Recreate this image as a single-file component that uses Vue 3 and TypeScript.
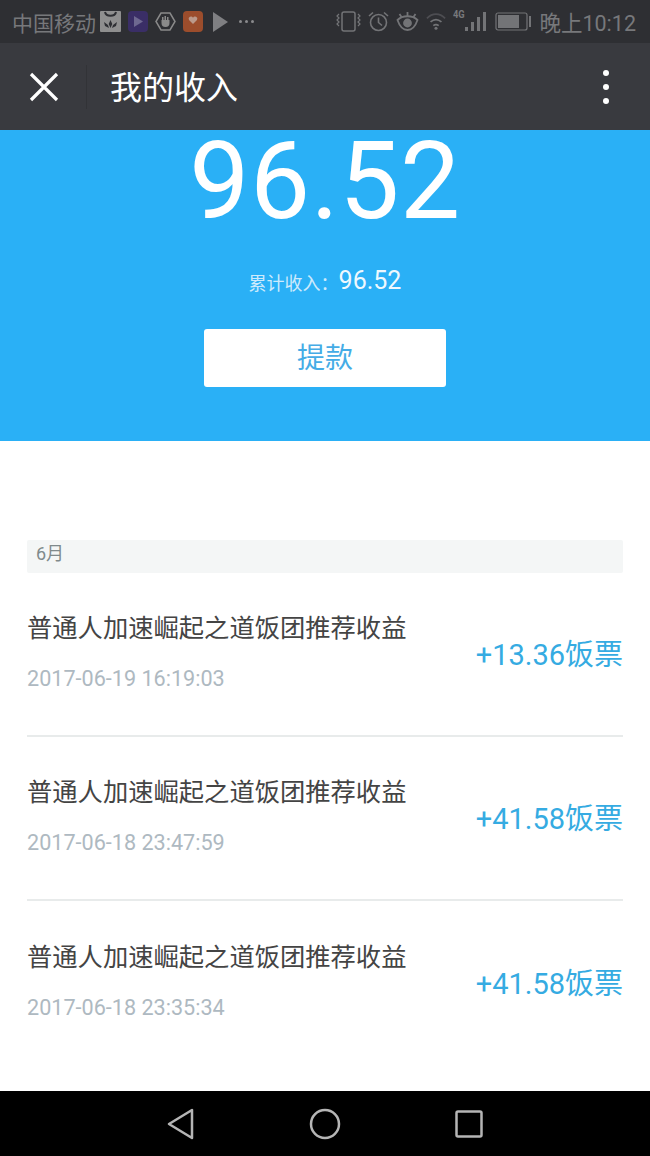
<script setup lang="ts">
interface IncomeRow {
  title: string
  time: string
  amount: string
}

const rows: IncomeRow[] = [
  { title: '普通人加速崛起之道饭团推荐收益', time: '2017-06-19 16:19:03', amount: '+13.36饭票' },
  { title: '普通人加速崛起之道饭团推荐收益', time: '2017-06-18 23:47:59', amount: '+41.58饭票' },
  { title: '普通人加速崛起之道饭团推荐收益', time: '2017-06-18 23:35:34', amount: '+41.58饭票' },
]
</script>

<template>
  <div class="phone">
    <div class="status">
      <div class="status-left">
        <span class="carrier">中国移动</span>
        <svg class="ic" width="21" height="21" viewBox="0 0 21 21">
          <rect width="21" height="21" rx="1" fill="#8f8f8f" />
          <path d="M5 1c1 5 10 5 11 0" fill="none" stroke="#2e2f33" stroke-width="2" />
          <path d="M10.500 9l1.800 4-1.800 4-1.800-4zM4 11l4 3 1 3-4-2zM17 11l-4 3-1 3 4-2z" fill="#2e2f33" />
        </svg>
        <svg class="ic" width="20" height="21" viewBox="0 0 20 21">
          <rect width="20" height="21" rx="4" fill="#3a2e66" />
          <path d="M6 5l9 5.500-9 5.500z" fill="#6e6890" />
        </svg>
        <svg class="ic" width="21" height="21" viewBox="0 0 21 21">
          <path d="M6 2h9l5 8.500-5 8.500H6l-5-8.500z" fill="none" stroke="#8a8a8a" stroke-width="1.500" />
          <path d="M6.500 9h8v3a4 4 0 0 1-8 0zM7 9V6h1.500v3M9.500 9V5H11v4M12 9V6h1.500v3" fill="#8a8a8a" />
        </svg>
        <svg class="ic" width="20" height="21" viewBox="0 0 20 21">
          <rect width="20" height="21" rx="4" fill="#9c4d2c" />
          <path d="M10 13L6 9a2.300 2.300 0 0 1 4-2.300A2.300 2.300 0 0 1 14 9z" fill="#bb9a8b" />
        </svg>
        <svg class="ic ic-play" width="15" height="20" viewBox="0 0 15 20">
          <path d="M0 0l15 10L0 20z" fill="#7f7f82" />
        </svg>
        <span class="more"><i></i><i></i><i></i></span>
      </div>
      <div class="status-right">
        <svg width="25" height="21" viewBox="0 0 25 21" fill="none" stroke="#737477" stroke-width="1.500">
          <rect x="6" y="1" width="13" height="19" rx="2" />
          <path d="M3 3l-2 2 2 2-2 2 2 2-2 2 2 2M22 3l2 2-2 2 2 2-2 2 2 2-2 2" stroke-width="1.200" />
        </svg>
        <svg width="21" height="21" viewBox="0 0 21 21" fill="none" stroke="#737477" stroke-width="1.600">
          <circle cx="10.500" cy="11.500" r="8" />
          <path d="M10.500 6.500v5l3.500 3M1 5l4-3.500M20 5l-4-3.500" />
        </svg>
        <svg width="23" height="21" viewBox="0 0 22 21" fill="none" stroke="#737477" stroke-width="1.800">
          <path d="M1 9c5-5 15-5 20 0-2 6-5 10-10 10S3 15 1 9z" />
          <circle cx="11" cy="12" r="3.500" fill="#737477" />
          <path d="M3 3l2 3M11 1v4M19 3l-2 3" />
        </svg>
        <svg width="20" height="19" viewBox="0 0 22 19" fill="none" stroke="#737477" stroke-width="1.900">
          <path d="M1 6c6-6 14-6 20 0" opacity=".45" />
          <path d="M5 10c4-3.500 8-3.500 12 0" />
          <path d="M8 14c2-1.500 4-1.500 6 0" />
          <circle cx="11" cy="17" r="1.700" fill="#737477" stroke="none" />
        </svg>
        <div class="signal">
          <span class="net">4G</span>
          <svg width="21" height="21" viewBox="0 0 21 21" fill="#737477">
            <rect x="0" y="16" width="3" height="4" />
            <rect x="6" y="11" width="3" height="9" />
            <rect x="12" y="6" width="3" height="14" />
            <rect x="18" y="1" width="3" height="19" />
          </svg>
        </div>
        <svg class="battery" width="37" height="19" viewBox="0 0 37 19">
          <rect x="1" y="1" width="31" height="17" rx="2" fill="none" stroke="#737477" stroke-width="1.200" />
          <rect x="3" y="3" width="21" height="13" fill="#737477" />
          <rect x="34" y="4" width="2" height="11" fill="#737477" />
        </svg>
        <span class="clock">晚上10:12</span>
      </div>
    </div>

    <div class="topbar">
      <svg class="close" width="30" height="30" viewBox="0 0 30 30" stroke="#fff" stroke-width="3.200">
        <path d="M2 2l26 26M28 2L2 28" />
      </svg>
      <div class="divider"></div>
      <div class="title">我的收入</div>
      <div class="dots"><i></i><i></i><i></i></div>
    </div>

    <div class="hero">
      <div class="balance">96.52</div>
      <div class="total"><span class="total-label">累计收入：</span><span class="total-num">96.52</span></div>
      <button class="withdraw">提款</button>
    </div>

    <div class="content">
      <div class="month">6月</div>
      <div v-for="(row, i) in rows" :key="i" class="row">
        <div class="row-main">
          <div class="row-title">{{ row.title }}</div>
          <div class="row-time">{{ row.time }}</div>
        </div>
        <div class="row-amount">{{ row.amount }}</div>
      </div>
    </div>

    <div class="navbar">
      <svg width="28" height="32" viewBox="0 0 28 32" fill="none" stroke="#b5b5b5" stroke-width="2.500" stroke-linejoin="round">
        <path d="M25 2v28L2 16z" />
      </svg>
      <svg width="32" height="32" viewBox="0 0 32 32" fill="none" stroke="#b5b5b5" stroke-width="2.500">
        <circle cx="16" cy="16" r="14" />
      </svg>
      <svg width="28" height="28" viewBox="0 0 28 28" fill="none" stroke="#b5b5b5" stroke-width="2.500" stroke-linejoin="round">
        <rect x="1.500" y="1.500" width="25" height="25" rx="1.500" />
      </svg>
    </div>
  </div>
</template>

<style>
body {
  margin: 0;
}
</style>

<style scoped>
.phone {
  width: 650px;
  height: 1156px;
  display: flex;
  flex-direction: column;
  overflow: hidden;
  background: #fff;
  font-family: Roboto, "Noto Sans CJK SC", sans-serif;
}

.status {
  height: 43px;
  box-sizing: border-box;
  background: #2e2f33;
  display: flex;
  justify-content: space-between;
  align-items: center;
  padding: 0 14px 0 12px;
  color: #77787b;
}

.status-left,
.status-right {
  display: flex;
  align-items: center;
}

.carrier {
  font-size: 21px;
  margin-right: 4px;
}

.ic {
  margin-right: 7px;
}

.ic-play {
  margin-left: 3px;
}

.more {
  display: flex;
  gap: 3px;
  margin-left: 4px;
}

.more i {
  width: 3px;
  height: 3px;
  border-radius: 50%;
  background: #8a8a8d;
}

.status-right {
  gap: 7px;
}

.signal {
  position: relative;
  width: 33px;
  margin-right: 2px;
  display: flex;
  justify-content: flex-end;
}

.net {
  position: absolute;
  left: 0;
  top: -3px;
  font-size: 11px;
  font-weight: 700;
  transform: scaleX(0.85);
  transform-origin: left;
}

.clock {
  font-size: 21.500px;
  white-space: nowrap;
}

.topbar {
  height: 87px;
  box-sizing: border-box;
  background: #393a3f;
  display: flex;
  align-items: center;
  color: #fff;
  flex-shrink: 0;
}

.close {
  margin-left: 29px;
}

.divider {
  width: 1px;
  height: 44px;
  background: #323337;
  margin-left: 27px;
}

.title {
  font-size: 32px;
  margin: 0 0 4px 23px;
  flex: 1;
}

.dots {
  display: flex;
  flex-direction: column;
  gap: 8px;
  margin-right: 41px;
}

.dots i {
  width: 6px;
  height: 6px;
  border-radius: 50%;
  background: #fff;
}

.hero {
  height: 311px;
  background: #2ab0f6;
  display: flex;
  flex-direction: column;
  align-items: center;
  flex-shrink: 0;
}

.balance {
  font-size: 107px;
  line-height: 100px;
  color: #fff;
  margin-top: 2px;
  letter-spacing: 0.500px;
}

.total {
  margin-top: 32px;
  height: 32px;
  display: flex;
  align-items: center;
  color: #cdeafc;
}

.total-label {
  font-size: 18px;
  margin-top: 4px;
}

.total-num {
  font-size: 25px;
  color: #fff;
  opacity: 0.92;
}

.withdraw {
  width: 242px;
  height: 58px;
  margin-top: 33px;
  padding: 0 0 5px;
  border: 0;
  border-radius: 3px;
  background: #fff;
  color: #45ace6;
  font: inherit;
  font-size: 28px;
}

.content {
  flex: 1;
  padding: 99px 27px 0;
}

.month {
  height: 33px;
  line-height: 27px;
  box-sizing: border-box;
  background: #f4f6f6;
  border-radius: 2px;
  padding-left: 9px;
  font-size: 18px;
  color: #808a8c;
}

.row {
  height: 164px;
  box-sizing: border-box;
  border-bottom: 2px solid #e8ebeb;
  display: flex;
  align-items: center;
  justify-content: space-between;
}

.row:last-child {
  border-bottom: 0;
}

.row-main {
  padding-bottom: 4px;
}

.row-title {
  font-size: 25.300px;
  line-height: 36px;
  color: #444;
}

.row-time {
  font-size: 21.600px;
  line-height: 28px;
  margin-top: 18px;
  color: #aeb9c1;
}

.row-amount {
  font-size: 29px;
  color: #35abe2;
  margin-bottom: 4px;
}

.navbar {
  height: 65px;
  background: #000;
  display: flex;
  justify-content: center;
  align-items: center;
  gap: 114px;
  flex-shrink: 0;
}
</style>
